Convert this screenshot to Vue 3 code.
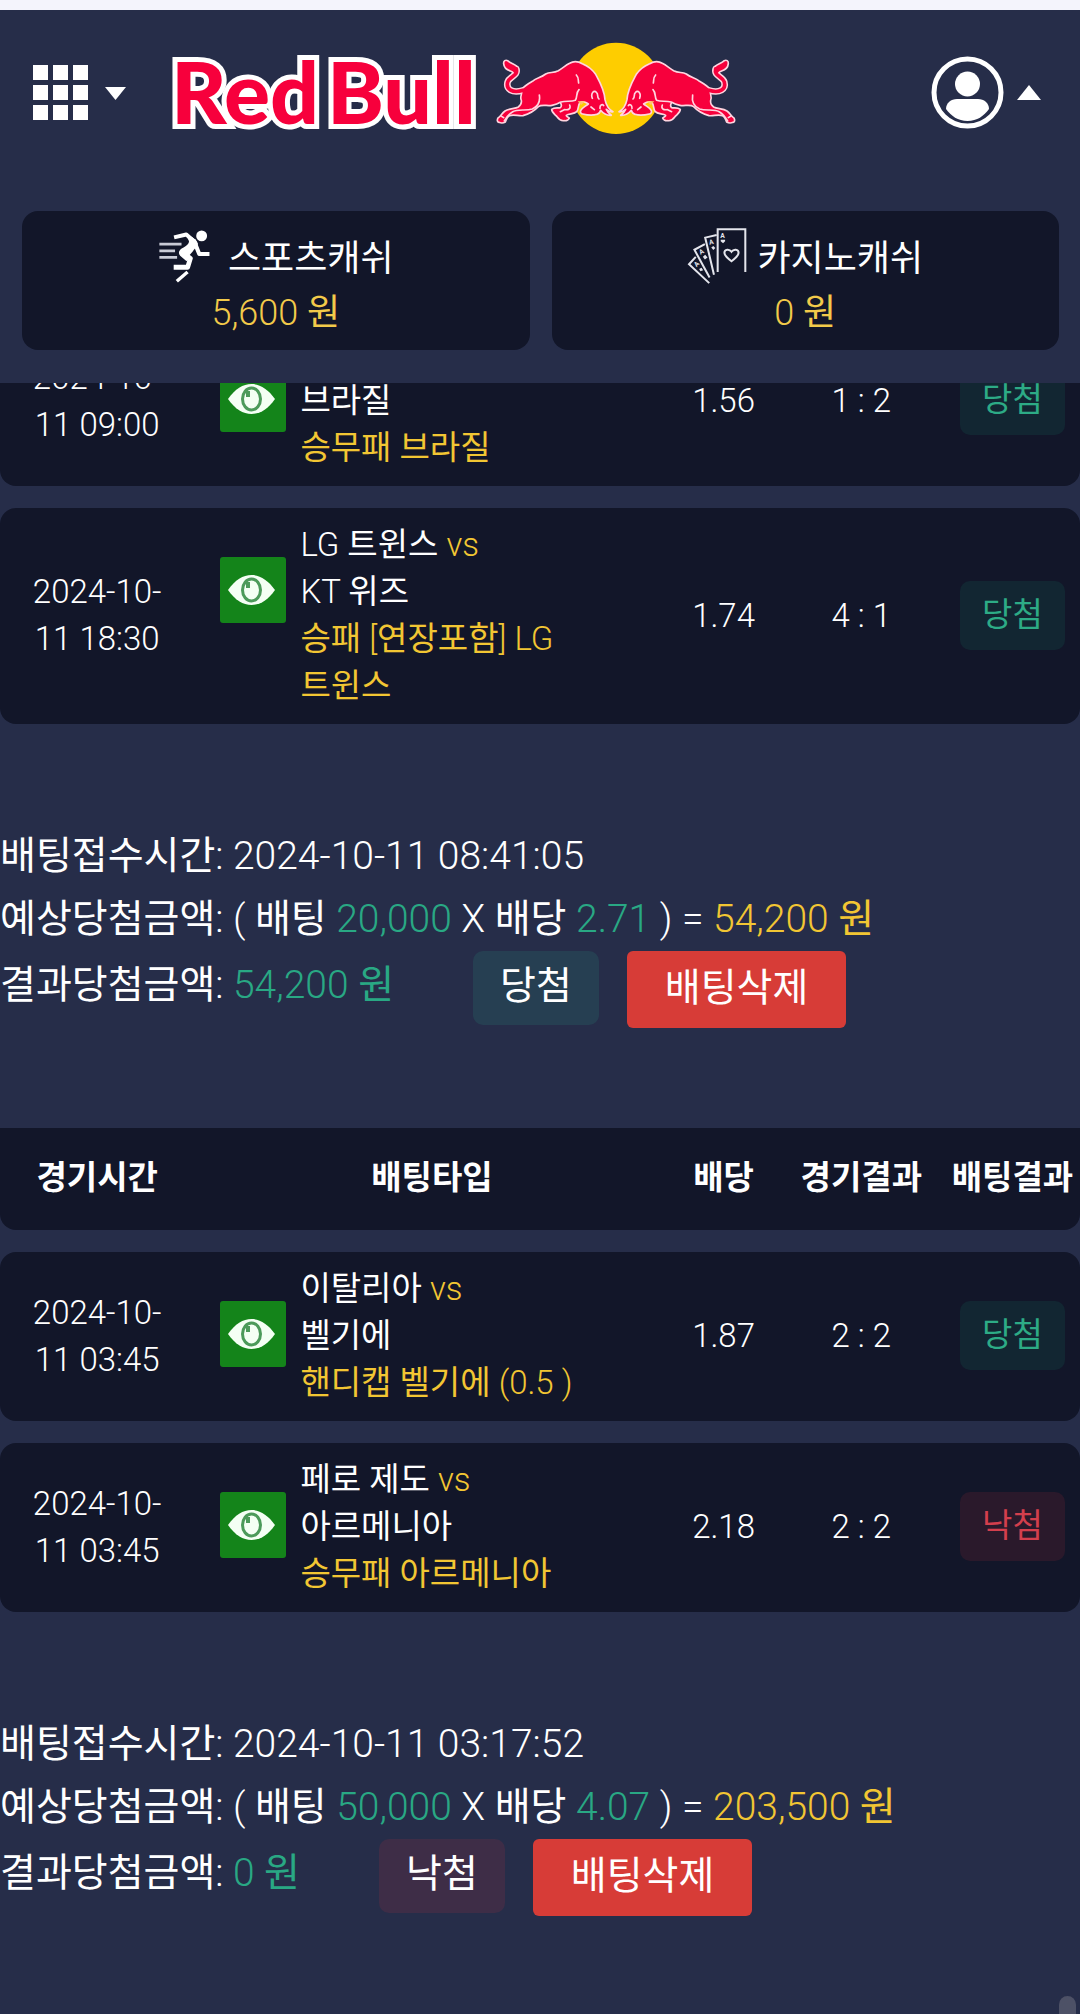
<template>
  <div class="page">
    <header class="header">
      <div class="top-bar">
        <button type="button" class="icon-button" aria-label="메뉴">
          <svg class="icon-grid" viewBox="0 0 55 55">
            <rect
              v-for="n in 9"
              :key="n"
              :x="((n - 1) % 3) * 20"
              :y="Math.floor((n - 1) / 3) * 20"
              width="15"
              height="15"
              fill="#fff" />
          </svg>
          <svg class="icon-caret" viewBox="0 0 24 15">
            <path d="M1 2H22L11.5 15Z" fill="#fff" />
          </svg>
        </button>

        <a href="#" class="logo" aria-label="Red Bull">
          <svg viewBox="0 2 570 100">
            <g class="logo-text">
              <text x="2" y="83">Red</text>
              <text x="158" y="83">Bull</text>
            </g>
            <g transform="translate(310 -20) scale(0.3333)">
              <circle cx="411" cy="202" r="137" fill="#fecd00" />
              <g
                v-for="side in ['', 'translate(822 0) scale(-1 1)']"
                :key="side"
                :transform="side"
                stroke-linejoin="round"
                stroke-linecap="round">
                <path
                  d="M132 208C100 218 80 205 86 183C91 165 118 166 112 144"
                  fill="none"
                  stroke="#ffd5e0"
                  stroke-width="20" />
                <path
                  d="M119 150C119 130 98 131 86 119C80 116 73 119 74 128C75 140 84 147 94 150C101 152 103 156 106 160Z"
                  fill="#f7003c"
                  stroke="#ffd5e0"
                  stroke-width="5" />
                <path
                  d="M402 272C390 266 382 255 378 236C376 205 362 182 350 160C340 145 325 134 310 128C297 121 285 119 272 127C260 133 250 142 238 149C222 157 213 152 200 159C186 170 172 171 162 180C150 187 138 193 127 206C132 218 121 226 127 238C128 244 126 252 118 258C108 264 90 262 78 270C68 277 65 287 57 291C54 297 54 303 60 304C67 307 74 306 79 303C82 294 84 288 91 284C106 279 118 286 132 284C153 278 166 270 178 257C188 249 205 256 219 253C229 251 236 249 244 244C248 251 249 256 244 260C236 262 227 258 218 265C218 275 228 280 234 287C240 295 248 300 255 299C264 300 270 295 271 291C266 286 261 287 262 283C270 277 286 280 293 272C300 264 296 252 303 245C310 239 322 244 328 249C318 257 310 259 305 269C303 275 307 279 311 279C323 282 344 283 354 280C360 279 363 275 365 268C373 278 382 284 397 283C389 278 386 274 382 265C388 270 394 274 402 272Z"
                  fill="#f7003c"
                  stroke="#ffd5e0"
                  stroke-width="5" />
                <path
                  d="M132 208C100 218 80 205 86 183C91 165 118 166 112 144"
                  fill="none"
                  stroke="#f7003c"
                  stroke-width="11" />
                <path
                  d="M181 222C184 240 178 256 160 264C140 271 116 262 100 273C88 280 82 290 76 300M66 285L74 290M246 243C262 239 276 243 289 238C296 228 290 216 300 206M272 252C276 262 270 268 256 266L244 272M292 162C300 170 297 178 299 186M340 232C334 216 346 206 352 214C360 220 352 226 360 234M363 262C362 252 370 248 374 254M336 258L346 266"
                  fill="none"
                  stroke="#ffd5e0"
                  stroke-width="5" />
                <path d="M296 241H320L306 252Z" fill="#ffc56a" />
              </g>
            </g>
          </svg>
        </a>

        <button type="button" class="icon-button user" aria-label="내 정보">
          <svg class="icon-user" viewBox="0 0 73 73">
            <circle
              cx="36.5"
              cy="36.5"
              r="33.5"
              fill="none"
              stroke="#fff"
              stroke-width="5" />
            <circle cx="36.5" cy="28" r="12.5" fill="#fff" />
            <path
              d="M26 43H47C53 43 58 47 58 53C53 60 46 65 36.500 65C27 65 20 60 15 53C15 47 20 43 26 43Z"
              fill="#fff" />
          </svg>
          <svg class="icon-caret" viewBox="0 0 24 15">
            <path d="M0 15H24L12 0Z" fill="#fff" />
          </svg>
        </button>
      </div>

      <div class="cash-list">
        <div class="cash-card">
          <div class="cash-title">
            <svg class="cash-icon" viewBox="465 113 176 164">
              <path
                d="M469 160H534M469 180H515M469 199H521"
                stroke="#c9cbd6"
                stroke-width="8" />
              <circle cx="593" cy="136" r="16" fill="#fff" />
              <g
                fill="none"
                stroke="#fff"
                stroke-linejoin="round"
                stroke-linecap="square">
                <path d="M518 139L548 132L568 150" stroke-width="12" />
                <path d="M572 154L586 189H610" stroke-width="12" />
                <path d="M518 228H552L560 202L542 188" stroke-width="14" />
                <path d="M548 245L524 266" stroke-width="10" />
              </g>
              <path
                d="M546 130C560 136 576 144 582 158C582 168 572 172 568 180L556 194L566 204L548 210L530 194C522 184 528 176 540 170C550 164 556 160 556 152Z"
                fill="#fff" />
            </svg>
            <span>스포츠캐쉬</span>
          </div>
          <p class="cash-amount">5,600 원</p>
        </div>

        <div class="cash-card">
          <div class="cash-title">
            <svg class="cash-icon" viewBox="430 112 178 171" aria-hidden="true">
              <g fill="none" stroke="#e4e5ec" stroke-width="6">
                <path d="M521 245V118H603V245" />
                <path d="M510 253L484 143L518 135" />
                <path d="M497 261L452 179L483 162" />
                <path d="M496 278L436 222L456 200" />
                <path
                  d="M562 213C550 204 541 196 541 188C541 177 556 176 562 185C568 176 583 177 583 188C583 196 574 204 562 213Z" />
              </g>
              <g class="card-rank">
                <text x="529" y="144">A</text>
                <text x="497" y="164" transform="rotate(-12 497 164)">A</text>
                <text x="470" y="194" transform="rotate(-28 470 194)">A</text>
                <text x="458" y="231" transform="rotate(-44 458 231)">A</text>
              </g>
              <g fill="#e4e5ec">
                <path d="M530 149H543V154L537 160L530 154Z" />
                <path d="M502 172L508 168L514 174L508 180Z" />
                <path d="M477 200L484 194L491 202L483 208Z" />
                <path d="M466 236L473 232L478 240L470 243Z" />
              </g>
            </svg>
            <span>카지노캐쉬</span>
          </div>
          <p class="cash-amount">0 원</p>
        </div>
      </div>
    </header>

    <main class="history">
      <section v-for="ticket in tickets" :key="ticket.time" class="ticket">
        <table class="bet-table" :class="{ scrolled: !ticket.showHead }">
          <colgroup>
            <col class="col-time" />
            <col class="col-type" />
            <col class="col-odds" />
            <col class="col-score" />
            <col class="col-result" />
          </colgroup>
          <thead v-if="ticket.showHead">
            <tr>
              <th v-for="label in headers" :key="label" scope="col">
                {{ label }}
              </th>
            </tr>
          </thead>
          <tbody>
            <tr v-for="bet in ticket.bets" :key="bet.away">
              <td class="time">{{ bet.time }}</td>
              <td class="type">
                <div class="type-inner">
                  <button type="button" class="view-button" aria-label="보기">
                    <svg viewBox="0 0 66 66">
                      <path
                        d="M8 33C15 23 23 18 31.500 18C40 18 48 23 55 33C48 43 40 48 31.500 48C23 48 15 43 8 33Z"
                        fill="#f4fff4" />
                      <ellipse
                        cx="31.5"
                        cy="33"
                        rx="9"
                        ry="11"
                        fill="#f4fff4"
                        stroke="#4c9a5a"
                        stroke-width="3" />
                      <path d="M26 25H30V31H26Z" fill="#4c9a5a" />
                    </svg>
                  </button>
                  <div class="match">
                    {{ bet.home }}
                    <span v-if="bet.home" class="yellow">vs</span><br />
                    {{ bet.away }}<br />
                    <span class="yellow">{{ bet.pick }}</span>
                  </div>
                </div>
              </td>
              <td>{{ bet.odds }}</td>
              <td>{{ bet.score }}</td>
              <td>
                <span class="badge" :class="bet.win ? 'win' : 'lose'">
                  {{ bet.win ? "당첨" : "낙첨" }}
                </span>
              </td>
            </tr>
          </tbody>
        </table>

        <div class="summary">
          <p>배팅접수시간: {{ ticket.time }}</p>
          <p>
            예상당첨금액: ( 배팅 <span class="green">{{ ticket.stake }}</span> X
            배당 <span class="green">{{ ticket.odds }}</span> ) =
            <span class="yellow">{{ ticket.expected }} 원</span>
          </p>
          <div class="summary-result">
            <p>
              결과당첨금액: <span class="green">{{ ticket.payout }} 원</span>
            </p>
            <span class="ticket-badge" :class="ticket.win ? 'win' : 'lose'">
              {{ ticket.win ? "당첨" : "낙첨" }}
            </span>
            <button
              type="button"
              class="delete-button"
              @click="removeTicket(ticket)">
              배팅삭제
            </button>
          </div>
        </div>
      </section>
    </main>

    <div class="scroll-thumb"></div>
  </div>
</template>

<script setup>
import { ref } from "vue";

const headers = ["경기시간", "배팅타입", "배당", "경기결과", "배팅결과"];

const tickets = ref([
  {
    time: "2024-10-11 08:41:05",
    stake: "20,000",
    odds: "2.71",
    expected: "54,200",
    payout: "54,200",
    win: true,
    showHead: false,
    bets: [
      {
        time: "2024-10-11 09:00",
        home: "",
        away: "브라질",
        pick: "승무패 브라질",
        odds: "1.56",
        score: "1 : 2",
        win: true,
      },
      {
        time: "2024-10-11 18:30",
        home: "LG 트윈스",
        away: "KT 위즈",
        pick: "승패 [연장포함] LG 트윈스",
        odds: "1.74",
        score: "4 : 1",
        win: true,
      },
    ],
  },
  {
    time: "2024-10-11 03:17:52",
    stake: "50,000",
    odds: "4.07",
    expected: "203,500",
    payout: "0",
    win: false,
    showHead: true,
    bets: [
      {
        time: "2024-10-11 03:45",
        home: "이탈리아",
        away: "벨기에",
        pick: "핸디캡 벨기에 (0.5 )",
        odds: "1.87",
        score: "2 : 2",
        win: true,
      },
      {
        time: "2024-10-11 03:45",
        home: "페로 제도",
        away: "아르메니아",
        pick: "승무패 아르메니아",
        odds: "2.18",
        score: "2 : 2",
        win: false,
      },
    ],
  },
]);

const removeTicket = (ticket) => {
  tickets.value = tickets.value.filter((item) => item !== ticket);
};
</script>

<style>
body {
  background-color: #262d49;
}
</style>

<style scoped>
.page {
  min-height: 100vh;
  background-color: #262d49;
  color: #fff;
  font-family: "Roboto Light", Roboto, "Noto Sans CJK KR", sans-serif;
  font-size: 33px;
  font-weight: 400;
  line-height: 47px;
  word-break: keep-all;
}

p {
  margin: 0;
}

button {
  padding: 0;
  border: none;
  background: none;
  color: inherit;
  font: inherit;
  cursor: pointer;
}

.header {
  position: relative;
  z-index: 1;
  padding: 0 21px 33px 22px;
  border-top: 10px solid #f4f4fc;
  background-color: #262d49;
}

.top-bar {
  display: flex;
  align-items: center;
  height: 165px;
  padding: 0 18px 0 11px;
}

.icon-button {
  display: flex;
  align-items: center;
  gap: 16px;
}

.icon-button.user {
  gap: 13px;
  margin-left: auto;
}

.icon-grid {
  width: 55px;
  height: 55px;
}

.icon-caret {
  width: 24px;
  height: 15px;
}

.icon-user {
  width: 73px;
  height: 73px;
}

.logo {
  margin-left: 41px;
}

.logo svg {
  display: block;
  width: 570px;
  height: 100px;
  overflow: visible;
}

.logo-text {
  font-family: Lato, sans-serif;
  font-size: 86px;
  font-weight: 900;
  fill: #f7003c;
  stroke: #fff;
  stroke-width: 10px;
  paint-order: stroke;
}

.card-rank {
  font-family: Roboto, sans-serif;
  font-size: 20px;
  font-weight: 700;
  fill: #e4e5ec;
}

.cash-list {
  display: grid;
  grid-template-columns: 1fr 1fr;
  gap: 22px;
  margin-top: 36px;
}

.cash-card {
  padding: 16px 0 11px;
  border-radius: 16px;
  background-color: #121629;
  font-size: 36px;
  text-align: center;
}

.cash-title {
  display: flex;
  align-items: center;
  justify-content: center;
  gap: 10px;
}

.cash-title span {
  padding-top: 6px;
}

.cash-icon {
  width: 60px;
  height: 58px;
}

.cash-amount {
  padding-top: 3px;
  color: #f2ca4a;
  line-height: 51px;
}

.history {
  overflow: hidden;
}

.bet-table {
  width: 100%;
  table-layout: fixed;
  border-collapse: separate;
  border-spacing: 0 22px;
}

/* 고정 헤더 아래로 스크롤된 목록 */
.bet-table.scrolled {
  margin-top: -88px;
}

.col-time {
  width: 18%;
}

.col-type {
  width: 44%;
}

.col-odds {
  width: 10%;
}

.col-score {
  width: 15.5%;
}

.col-result {
  width: 12.5%;
}

th {
  padding: 26px 0 29px;
  background-color: #121629;
  font-weight: 700;
  white-space: nowrap;
}

th:first-child {
  border-bottom-left-radius: 16px;
}

th:last-child {
  border-bottom-right-radius: 16px;
}

td {
  padding: 13px 0 15px;
  background-color: #121629;
  text-align: center;
}

td:first-child {
  border-radius: 16px 0 0 16px;
}

td:last-child {
  border-radius: 0 16px 16px 0;
}

td.time {
  padding: 13px 20px 15px;
}

td.type {
  padding: 13px 48px 15px 26px;
  text-align: left;
  vertical-align: top;
}

.type-inner {
  display: flex;
  align-items: flex-start;
  gap: 14px;
}

.view-button {
  flex: none;
  width: 66px;
  height: 66px;
  margin-top: 36px;
  border-radius: 3px;
  background-color: #14841a;
}

.view-button svg {
  display: block;
}

.badge {
  display: inline-block;
  padding: 10px 22px 12px;
  border-radius: 10px;
  vertical-align: middle;
}

.badge.win {
  background-color: #122632;
  color: #2dab86;
}

.badge.lose {
  background-color: #2a192b;
  color: #d33f4d;
}

.yellow {
  color: #f2c633;
}

.green {
  color: #29a884;
}

.summary {
  padding: 79px 0 78px;
  font-size: 39px;
  line-height: 63px;
}

.summary-result {
  display: flex;
  align-items: flex-start;
}

.summary-result p {
  padding-top: 3px;
}

.ticket-badge {
  margin-left: 79px;
  padding: 4px 27px 7px;
  border-radius: 10px;
}

.ticket-badge.win {
  background-color: #263f52;
}

.ticket-badge.lose {
  background-color: #3e2d47;
}

.delete-button {
  margin-left: 28px;
  padding: 6px 38px 8px;
  border-radius: 6px;
  background-color: #d73c37;
}

.scroll-thumb {
  position: fixed;
  right: 4px;
  bottom: 0;
  width: 17px;
  height: 18px;
  border-radius: 9px 9px 0 0;
  background-color: #4d5166;
}
</style>
